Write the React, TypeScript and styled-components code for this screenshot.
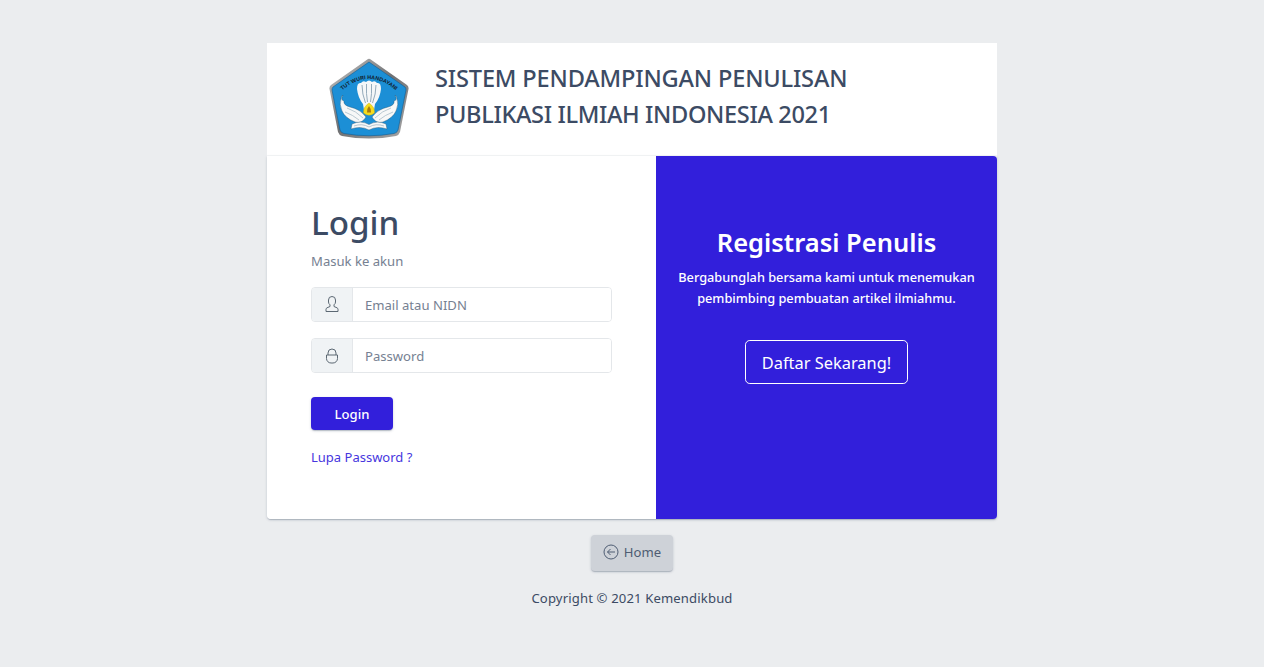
import React from "react";
import styled, { createGlobalStyle } from "styled-components";

const Global = createGlobalStyle`
  html, body { margin: 0; padding: 0; background: #ebedef; }
  body { font-family: "Noto Sans", "Open Sans", sans-serif; color: #3c4b64; }
  * { box-sizing: border-box; }
`;

const Page = styled.div`
  min-height: 667px;
  display: flex;
  flex-direction: column;
  align-items: center;
  padding-top: 43px;
`;
const Wrap = styled.div`
  width: 730px;
`;
const Header = styled.header`
  height: 113px;
  background: #fff;
  display: flex;
  align-items: center;
  padding: 0 0 0 61px;
  gap: 25px;
  border-bottom: 1px solid #f6f7f8;
`;
const Title = styled.h1`
  margin: 0 0 6px;
  font-size: 23.6px;
  line-height: 36px;
  font-weight: 500;
  color: #3c4b64;
  white-space: nowrap;
`;
const TitleLine = styled.span<{ $spacing: number }>`
  display: block;
  letter-spacing: ${(p) => p.$spacing}px;
`;
const Columns = styled.div`
  display: flex;
  height: 363px;
  border-radius: 0 0 4px 4px;
  box-shadow: 0 1px 1px 0 rgba(60, 75, 100, 0.14), 0 2px 1px -1px rgba(60, 75, 100, 0.12), 0 1px 3px 0 rgba(60, 75, 100, 0.2);
`;
const LoginPanel = styled.section`
  width: 389px;
  background: #fff;
  padding: 44px 44px 0;
  border-radius: 0 0 0 4px;
`;
const Heading = styled.h2`
  margin: 0;
  font-size: 33.2px;
  line-height: 45px;
  font-weight: 500;
  color: #3c4b64;
`;
const Muted = styled.p`
  margin: 6px 0 16px;
  font-size: 13.1px;
  line-height: 20px;
  color: #768192;
`;
const InputGroup = styled.div`
  display: flex;
  height: 35px;
  width: 301px;
  margin-bottom: 16px;
  border: 1px solid #e4e7ea;
  border-radius: 4px;
  overflow: hidden;
`;
const Addon = styled.span`
  width: 41px;
  background: #f0f3f5;
  border-right: 1px solid #e4e7ea;
  display: flex;
  align-items: center;
  justify-content: center;
  color: #5c6873;
`;
const Input = styled.input`
  flex: 1;
  min-width: 0;
  border: 0;
  outline: 0;
  padding: 0 12px;
  font: 13.1px "Noto Sans", sans-serif;
  color: #768192;
  &::placeholder { color: #768192; opacity: 1; }
`;
const LoginButton = styled.button`
  display: block;
  margin-top: 24px;
  width: 82px;
  height: 33px;
  border: 0;
  border-radius: 4px;
  padding: 0;
  background: #321fdb;
  color: #fff;
  font: 500 13.1px "Noto Sans", sans-serif;
  box-shadow: 0 1px 1px 0 rgba(60, 75, 100, 0.14), 0 2px 1px -1px rgba(60, 75, 100, 0.12), 0 1px 3px 0 rgba(60, 75, 100, 0.2);
`;
const Forgot = styled.a`
  display: block;
  margin-top: 17px;
  font-size: 13px;
  line-height: 20px;
  color: #4636de;
  text-decoration: none;
`;
const RegisterPanel = styled.section`
  flex: 1;
  background: #321fdb;
  color: #fff;
  text-align: center;
  padding: 67px 16px 0;
  border-radius: 0 4px 4px 0;
`;
const RegisterTitle = styled.h2`
  margin: 0 0 6px;
  font-size: 25.5px;
  line-height: 38px;
  font-weight: 600;
`;
const RegisterText = styled.p`
  margin: 0 0 31px;
  font-size: 12.75px;
  line-height: 21px;
  font-weight: 500;
  white-space: nowrap;
`;
const RegisterButton = styled.a`
  display: inline-flex;
  align-items: center;
  justify-content: center;
  width: 163px;
  height: 44px;
  border: 1px solid #fff;
  border-radius: 4.8px;
  font-size: 16.4px;
  color: #fff;
`;
const HomeButton = styled.a`
  margin-top: 16px;
  width: 82px;
  height: 36px;
  display: flex;
  align-items: center;
  justify-content: center;
  gap: 5px;
  border-radius: 4px;
  background: #ced2d8;
  color: #4f5d73;
  font-size: 13.1px;
  padding-bottom: 3px;
  box-shadow: 0 1px 1px 0 rgba(60, 75, 100, 0.14), 0 2px 1px -1px rgba(60, 75, 100, 0.12), 0 1px 3px 0 rgba(60, 75, 100, 0.2);
`;
const Copyright = styled.footer`
  margin-top: 17px;
  font-size: 13.1px;
  line-height: 20px;
  letter-spacing: 0.14px;
  color: #3c4b64;
`;

const Logo = () => (
  <svg width="82" height="82" viewBox="0 0 82 82" aria-label="Logo Tut Wuri Handayani">
    <defs>
      <path id="arc" d="M9 37 Q41 5 73 37" fill="none" />
      <linearGradient id="rim" x1="0" y1="0" x2="1" y2="1">
        <stop offset="0" stopColor="#c9c9c9" />
        <stop offset="0.5" stopColor="#6f7072" />
        <stop offset="1" stopColor="#a9a9a9" />
      </linearGradient>
    </defs>
    <path d="M40 1 Q41 .5 42 1 L79 27 Q81 29 80.500 31 L72 74 Q71 77 68 78 Q41 83 14 78 Q11 77 10 74 L1.500 31 Q1 29 3 27 Z" fill="url(#rim)" />
    <path d="M41 4 L77 29 Q78 30 78 32 L70 72 Q69 75 66 75.500 Q41 80 16 75.500 Q13 75 12 72 L4 32 Q4 30 5 29 Z" fill="#1c8fd6" stroke="#0f5e96" strokeWidth=".6" />
    <text fontSize="5.400" fontWeight="700" fill="#12202c" fontFamily="Liberation Sans, sans-serif">
      <textPath href="#arc" startOffset="50%" textAnchor="middle">TUT WURI HANDAYANI</textPath>
    </text>
    <path d="M29 31 Q29 24 33 25 Q35 22 38 24 Q41 21 44 24 Q47 22 49 25 Q53 24 53 31 Q52 40 47 46 L46 52 H36 L35 46 Q30 40 29 31 Z" fill="#f5f7f8" />
    <path d="M34 27 Q34 36 37.500 45 M38.500 26 Q38 36 39.500 44 M43.500 26 Q44 36 42.500 44 M48 27 Q48 36 44.500 45" stroke="#8aa2b3" strokeWidth=".9" fill="none" />
    <path d="M15 37 Q12 42 16 43 Q15 47 22 49 Q32 51 38 59 Q34 66 27 64 Q17 60 14 53 Q11 46 13 41 Q13 38 15 37 Z" fill="#f7f8f8" stroke="#24506f" strokeWidth=".4" />
    <path d="M67 37 Q70 42 66 43 Q67 47 60 49 Q50 51 44 59 Q48 66 55 64 Q65 60 68 53 Q71 46 69 41 Q69 38 67 37 Z" fill="#f7f8f8" stroke="#24506f" strokeWidth=".4" />
    <path d="M19 50 Q28 53 35 60 M17 54 Q25 57 31 62 M63 50 Q54 53 47 60 M65 54 Q57 57 51 62" stroke="#9fb4c2" strokeWidth=".7" fill="none" />
    <path d="M41 45 Q47 49 46.500 55 Q41 59.500 35.500 55 Q35 49 41 45 Z" fill="#f6dc1d" stroke="#c2a412" strokeWidth=".4" />
    <path d="M41 48 Q43.500 51 43 54.500 H39 Q38.500 51 41 48 Z" fill="#a6790f" />
    <path d="M24 66 Q33 62 41 66.500 Q49 62 58 66 L59 71 Q49 67.500 41 72 Q33 67.500 23 71 Z" fill="#f7f8f8" stroke="#24506f" strokeWidth=".4" />
    <path d="M26 68 Q34 65 41 69 Q48 65 56 68" stroke="#8aa2b3" strokeWidth=".6" fill="none" />
  </svg>
);

const UserIcon = () => (
  <svg width="14" height="17" viewBox="0 0 14 17" fill="none" stroke="#5c6873" strokeWidth="1">
    <path d="M3.500 4a3.500 3.500 0 0 1 7 0v2a3.500 3.500 0 0 1-1.500 2.800V10.500l3 1.300c.6.300 1 .8 1 1.500V15.500H1V13.300c0-.7.400-1.200 1-1.500l3-1.300V8.800A3.500 3.500 0 0 1 3.500 6Z" />
  </svg>
);
const LockIcon = () => (
  <svg width="14" height="16" viewBox="0 0 14 16" fill="none" stroke="#5c6873" strokeWidth="1">
    <path d="M3 7V5a4 4 0 0 1 8 0v2M1.500 7h11v3.500a4.500 4.500 0 0 1-4.500 4.500H6a4.500 4.500 0 0 1-4.500-4.500Z" />
  </svg>
);
const ArrowIcon = () => (
  <svg width="16" height="16" viewBox="0 0 16 16" fill="none" stroke="#4f5d73" strokeWidth="1">
    <circle cx="8" cy="8" r="7" />
    <path d="M12 8H4.500M7.500 5 4.500 8l3 3" />
  </svg>
);

export default function App() {
  return (
    <Page>
      <Global />
      <Wrap>
        <Header>
          <Logo />
          <Title>
            <TitleLine $spacing={-0.17}>SISTEM PENDAMPINGAN PENULISAN</TitleLine>
            <TitleLine $spacing={-0.36}>PUBLIKASI ILMIAH INDONESIA 2021</TitleLine>
          </Title>
        </Header>
        <Columns>
          <LoginPanel>
            <Heading>Login</Heading>
            <Muted>Masuk ke akun</Muted>
            <InputGroup>
              <Addon><UserIcon /></Addon>
              <Input placeholder="Email atau NIDN" />
            </InputGroup>
            <InputGroup>
              <Addon><LockIcon /></Addon>
              <Input placeholder="Password" type="password" />
            </InputGroup>
            <LoginButton>Login</LoginButton>
            <Forgot href="#">Lupa Password ?</Forgot>
          </LoginPanel>
          <RegisterPanel>
            <RegisterTitle>Registrasi Penulis</RegisterTitle>
            <RegisterText>Bergabunglah bersama kami untuk menemukan<br />pembimbing pembuatan artikel ilmiahmu.</RegisterText>
            <RegisterButton>Daftar Sekarang!</RegisterButton>
          </RegisterPanel>
        </Columns>
      </Wrap>
      <HomeButton><ArrowIcon />Home</HomeButton>
      <Copyright>Copyright © 2021 Kemendikbud</Copyright>
    </Page>
  );
}
